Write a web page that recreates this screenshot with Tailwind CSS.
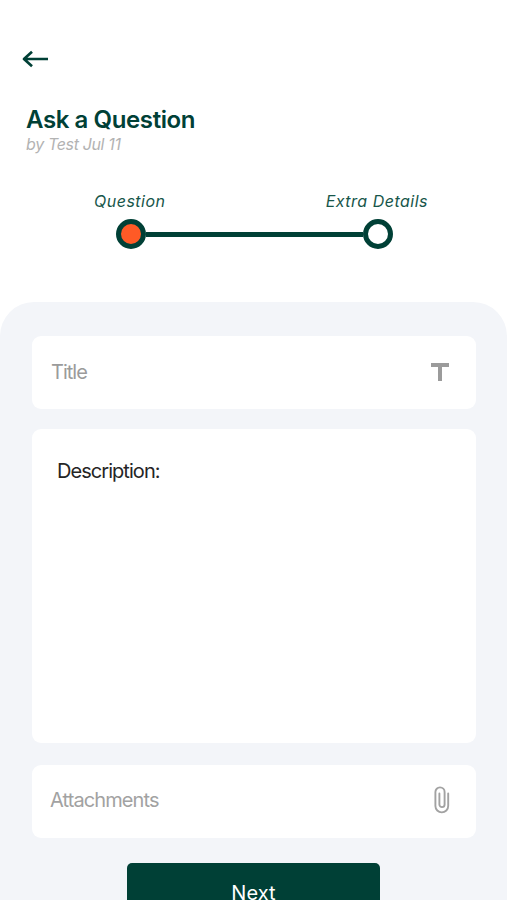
<!DOCTYPE html>
<html lang="en">
<head>
<meta charset="utf-8">
<meta name="viewport" content="width=device-width, initial-scale=1">
<title>Ask a Question</title>
<script src="https://cdn.jsdelivr.net/npm/@tailwindcss/browser@4"></script>
</head>
<body class="h-[900px] overflow-hidden bg-white font-['Inter',sans-serif] text-[#004036]">
<div class="flex h-full flex-col whitespace-nowrap">
  <header class="h-[302px] shrink-0 pt-[49px]">
    <button class="ml-[21px] block h-5 w-7" aria-label="Back">
      <svg class="h-5 w-7" viewBox="0 0 28 20" fill="none" stroke="currentColor" stroke-width="2.7" stroke-linejoin="round"><path d="M27 10H3.5M11 2.8L3 10L11 17.2"/></svg>
    </button>
    <h1 class="mt-[39px] ml-[26px] text-[24px] leading-6 font-semibold tracking-[-0.4px]">Ask a Question</h1>
    <p class="mt-1 ml-[26px] text-[16px] leading-4 tracking-[-0.35px] text-[#b3b3b3] italic">by Test Jul 11</p>
    <div class="mt-[41px] flex justify-between pr-[79px] pl-[94px] text-[16px] leading-4 tracking-[0.5px] text-[#17564a] italic">
      <span>Question</span><span>Extra Details</span>
    </div>
    <div class="mt-[10px] ml-[115.5px] flex w-[277px] items-center">
      <span class="size-[30px] rounded-full border-5 border-[#004036] bg-[#ff5a26]"></span>
      <span class="h-[5px] flex-1 bg-[#004036]"></span>
      <span class="size-[30px] rounded-full border-5 border-[#004036] bg-white"></span>
    </div>
  </header>
  <main class="flex flex-1 flex-col rounded-t-[34px] bg-[#f3f5f9] pt-[34px] pr-[31px] pl-8 text-[20px] leading-5">
    <div class="flex h-[73px] shrink-0 items-center justify-between rounded-[9px] bg-white pr-[27px] pb-[2px] pl-[19px] text-[#9b9b9b]">
      <span class="tracking-[-1px]">Title</span>
      <svg class="h-[18px] w-[18px]" viewBox="0 0 18 18" fill="none" stroke="#9b9b9b" stroke-width="4"><path d="M0 2H18M9 2V18"/></svg>
    </div>
    <div class="mt-5 h-[314px] shrink-0 rounded-[9px] bg-white pt-8 pl-[25px] tracking-[-0.95px] text-[#252525]">Description:</div>
    <div class="mt-[22px] flex h-[73px] shrink-0 items-center justify-between rounded-[9px] bg-white pr-[26px] pb-[4px] pl-[18px] text-[#a2a2a2]">
      <span class="tracking-[-0.9px]">Attachments</span>
      <svg class="h-7 w-4" viewBox="0 0 16 28" fill="none" stroke="#a2a2a2" stroke-width="1.9" stroke-linecap="round"><path d="M14.2 7.5V20A6.4 6.4 0 0 1 1.4 20V6A4.6 4.6 0 0 1 10.6 6V18.5A2.6 2.6 0 0 1 5.4 18.5V7.5"/></svg>
    </div>
    <button class="mt-[25px] ml-[95px] h-[60px] w-[253px] shrink-0 rounded-[5px] bg-[#004036] text-[20px] leading-5 tracking-[0.1px] text-white">Next</button>
  </main>
</div>
</body>
</html>
